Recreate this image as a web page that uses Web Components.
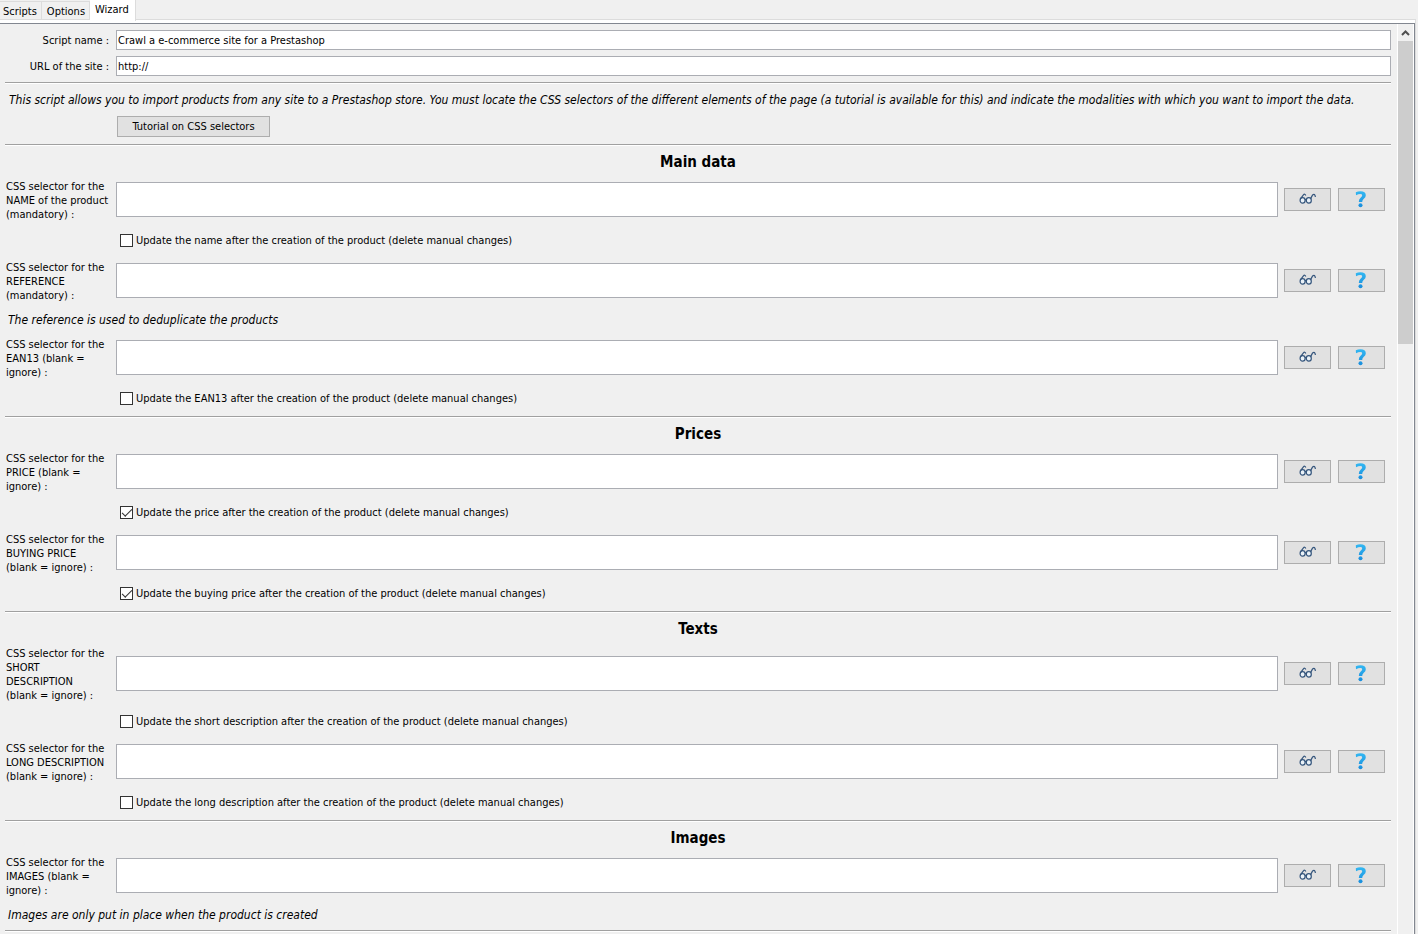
<!DOCTYPE html>
<html lang="en">
<head>
<meta charset="utf-8">
<title>Wizard</title>
<style>
  html, body { height: 100%; margin: 0; }
  body { background: #f0f0f0; color: #000; font: 11px/14px "DejaVu Sans Condensed", "DejaVu Sans", sans-serif; }
</style>
</head>
<body>
<wizard-app></wizard-app>

<template id="app">
  <style>
    :host { display: flex; flex-direction: column; height: 100vh; overflow: hidden; }
    .frame { flex: 1; min-height: 0; margin-right: 2px; border-top: 1px solid #dcdcdc; border-right: 1px solid #dcdcdc; background: #fff; padding-top: 3px; box-sizing: border-box; display: flex; }
    .view { flex: 1; min-width: 0; display: flex; background: #f0f0f0; border-top: 1px solid #828790; border-right: 1px solid #828790; }
    main { flex: 1; min-width: 0; overflow-y: auto; scrollbar-width: none; padding: 6px 6px 0 5px; }
    .tutorial { padding: 0 0 7px 112px; }
    .stack { display: flex; flex-direction: column; gap: 6px; padding-bottom: 6px; }
  </style>
  <tab-strip></tab-strip>
  <div class="frame"><div class="view">
    <main>
      <div class="stack">
        <text-row label="Script name :" value="Crawl a e-commerce site for a Prestashop"></text-row>
        <text-row label="URL of the site :" value="http://"></text-row>
      </div>
      <etched-line></etched-line>
      <hint-text intro>This script allows you to import products from any site to a Prestashop store. You must locate the CSS selectors of the different elements of the page (a tutorial is available for this) and indicate the modalities with which you want to import the data.</hint-text>
      <div class="tutorial"><push-button wide>Tutorial on CSS selectors</push-button></div>
      <form-section heading="Main data">
        <selector-field label="CSS selector for the NAME of the product (mandatory) :"><update-check>Update the name after the creation of the product (delete manual changes)</update-check></selector-field>
        <selector-field label="CSS selector for the REFERENCE (mandatory) :"><hint-text>The reference is used to deduplicate the products</hint-text></selector-field>
        <selector-field label="CSS selector for the EAN13 (blank = ignore) :"><update-check>Update the EAN13 after the creation of the product (delete manual changes)</update-check></selector-field>
      </form-section>
      <form-section heading="Prices">
        <selector-field label="CSS selector for the PRICE (blank = ignore) :"><update-check checked>Update the price after the creation of the product (delete manual changes)</update-check></selector-field>
        <selector-field label="CSS selector for the BUYING PRICE (blank = ignore) :"><update-check checked>Update the buying price after the creation of the product (delete manual changes)</update-check></selector-field>
      </form-section>
      <form-section heading="Texts">
        <selector-field label="CSS selector for the SHORT DESCRIPTION (blank&nbsp;= ignore) :"><update-check>Update the short description after the creation of the product (delete manual changes)</update-check></selector-field>
        <selector-field label="CSS selector for the LONG DESCRIPTION (blank = ignore) :"><update-check>Update the long description after the creation of the product (delete manual changes)</update-check></selector-field>
      </form-section>
      <form-section heading="Images">
        <selector-field label="CSS selector for the IMAGES (blank = ignore) :"><hint-text>Images are only put in place when the product is created</hint-text></selector-field>
      </form-section>
      <etched-line></etched-line>
    </main>
    <scroll-bar aria-hidden="true"></scroll-bar>
  </div></div>
</template>

<template id="tabs">
  <style>
    :host { display: flex; align-items: flex-end; height: 19px; flex: none; position: relative; }
    button { font: inherit; color: inherit; margin: 0; padding: 2px 4px 0 3px; height: 18px; border: 1px solid #dcdcdc; border-width: 1px 1px 0 0; background: #f0f0f0; }
    button + button { padding: 2px 4px 0 5px; }
    button[aria-selected=true] { align-self: flex-start; height: 21px; padding: 0 6px 2px 5px; border-width: 0 1px 0 0; background: #fff; position: relative; z-index: 1; }
  </style>
  <button role="tab" aria-selected="false">Scripts</button><button role="tab" aria-selected="false">Options</button><button role="tab" aria-selected="true">Wizard</button>
</template>

<template id="text-row">
  <style>
    :host { display: grid; grid-template-columns: 104px 1fr; column-gap: 7px; }
    label { text-align: right; padding-top: 4px; }
    input { font: inherit; color: inherit; box-sizing: border-box; width: 100%; height: 20px; margin: 0; padding: 0 1px; border: 1px solid #abadb3; border-radius: 0; background: #fff; outline: 0; }
  </style>
  <label for="f"></label><input id="f" type="text">
</template>

<template id="line">
  <style>:host { display: block; height: 1px; background: #a0a0a0; border-bottom: 1px solid #fff; }</style>
</template>

<template id="hint">
  <style>
    :host { display: block; font-size: 12px; font-style: italic; line-height: 30px; padding: 2px 0 0 3px; }
    :host([intro]) { padding: 1px 0 1px 4px; white-space: nowrap; }
  </style>
  <slot></slot>
</template>

<template id="push">
  <style>
    :host { display: block; }
    button { font: inherit; color: inherit; box-sizing: border-box; display: flex; align-items: center; justify-content: center; width: 47px; height: 23px; margin: 0; padding: 0; border: 1px solid #adadad; border-radius: 0; background: #e1e1e1; }
    :host([wide]) button { width: 153px; height: 21px; }
  </style>
  <button type="button"><slot></slot></button>
</template>

<template id="section">
  <style>
    :host { display: block; }
    h2 { margin: 0; font-size: 15px; line-height: 32px; padding-bottom: 1px; text-align: center; }
    .fields { display: flex; flex-direction: column; gap: 2px; }
  </style>
  <etched-line></etched-line>
  <h2></h2>
  <div class="fields"><slot></slot></div>
</template>

<template id="field">
  <style>
    :host { display: block; }
    .row { display: grid; grid-template-columns: 104px 1fr 47px 48px; column-gap: 6px; align-items: center; padding: 0 6px 0 1px; }
    label { padding: 1px 1px 0 0; }
    textarea { font: inherit; box-sizing: border-box; display: block; width: 100%; height: 35px; margin: 0 0 2px; padding: 2px; border: 1px solid #abadb3; border-radius: 0; resize: none; outline: 0; background: #fff; }
    push-button { margin-bottom: 2px; justify-self: end; }
    svg { display: block; }
  </style>
  <div class="row">
    <label for="f"></label>
    <textarea id="f"></textarea>
    <push-button><svg width="18" height="13" viewBox="0 0 18 13" fill="none" stroke="#34557c" stroke-width="1.2" role="img" aria-label="Preview"><ellipse cx="3.6" cy="7.4" rx="2.5" ry="2.7" fill="#eaf2f8"/><ellipse cx="9.8" cy="7.4" rx="2.5" ry="2.7" fill="#eaf2f8"/><path d="M6 6.6h1.4M1.6 5.6 4.4 1.8Q5.8.4 6.8 2.4M11.6 5.6 13.6 2Q15.8.2 16.4 4"/></svg></push-button>
    <push-button><svg width="13" height="17" viewBox="0 0 13 17" role="img" aria-label="Help"><defs><linearGradient id="g" gradientUnits="userSpaceOnUse" x1="0" y1="0" x2="0" y2="17"><stop offset="0" stop-color="#33b8f2"/><stop offset="1" stop-color="#178bdc"/></linearGradient></defs><path d="M.8 1.2Q3 .2 5.4.2 10.8.2 10.8 4.2 10.8 6.2 8.8 7.7 7.2 8.9 7.2 11H3.8Q3.8 8.2 5.6 6.7 7.2 5.4 7.2 4.3 7.2 3 5.2 3 3.4 3 1 4.2Z" fill="url(#g)"/><circle cx="5.5" cy="14.2" r="2" fill="url(#g)"/></svg></push-button>
  </div>
  <slot></slot>
</template>

<template id="check">
  <style>
    :host { display: flex; align-items: center; height: 35px; padding: 1px 0 0 115px; }
    label { display: flex; align-items: center; gap: 3px; }
    input { appearance: none; width: 13px; height: 13px; margin: 0; border: 1px solid #333; background: #fff; display: grid; place-items: center; }
    input:checked::before { content: ""; width: 10px; height: 5px; margin-bottom: 3px; box-sizing: border-box; border: solid #333; border-width: 0 0 1px 1px; transform: rotate(-45deg); }
  </style>
  <label><input type="checkbox"><span><slot></slot></span></label>
</template>

<template id="bar">
  <style>
    :host { display: flex; flex-direction: column; flex: none; width: 15px; border-left: 1px solid #fff; border-right: 1px solid #fff; background: #f0f0f0; }
    svg { display: block; flex: none; }
    .thumb { height: 303px; background: #cdcdcd; }
  </style>
  <svg width="15" height="17" viewBox="0 0 15 17"><path d="M4 11 7.5 7.5 11 11" fill="none" stroke="#505050" stroke-width="2"/></svg>
  <div class="thumb"></div>
</template>

<script>
  const define = (name, id, setup) => customElements.define(name, class extends HTMLElement {
    connectedCallback() {
      if (this.shadowRoot) return;
      const root = this.attachShadow({ mode: 'open' });
      root.append(document.getElementById(id).content.cloneNode(true));
      if (setup) setup(this, root);
    }
  });
  define('etched-line', 'line');
  define('hint-text', 'hint');
  define('push-button', 'push');
  define('scroll-bar', 'bar');
  define('tab-strip', 'tabs');
  define('text-row', 'text-row', (host, root) => {
    root.querySelector('label').textContent = host.getAttribute('label');
    root.querySelector('input').value = host.getAttribute('value');
  });
  define('update-check', 'check', (host, root) => {
    root.querySelector('input').checked = host.hasAttribute('checked');
  });
  define('selector-field', 'field', (host, root) => {
    root.querySelector('label').textContent = host.getAttribute('label');
  });
  define('form-section', 'section', (host, root) => {
    root.querySelector('h2').textContent = host.getAttribute('heading');
  });
  define('wizard-app', 'app');
</script>
</body>
</html>
